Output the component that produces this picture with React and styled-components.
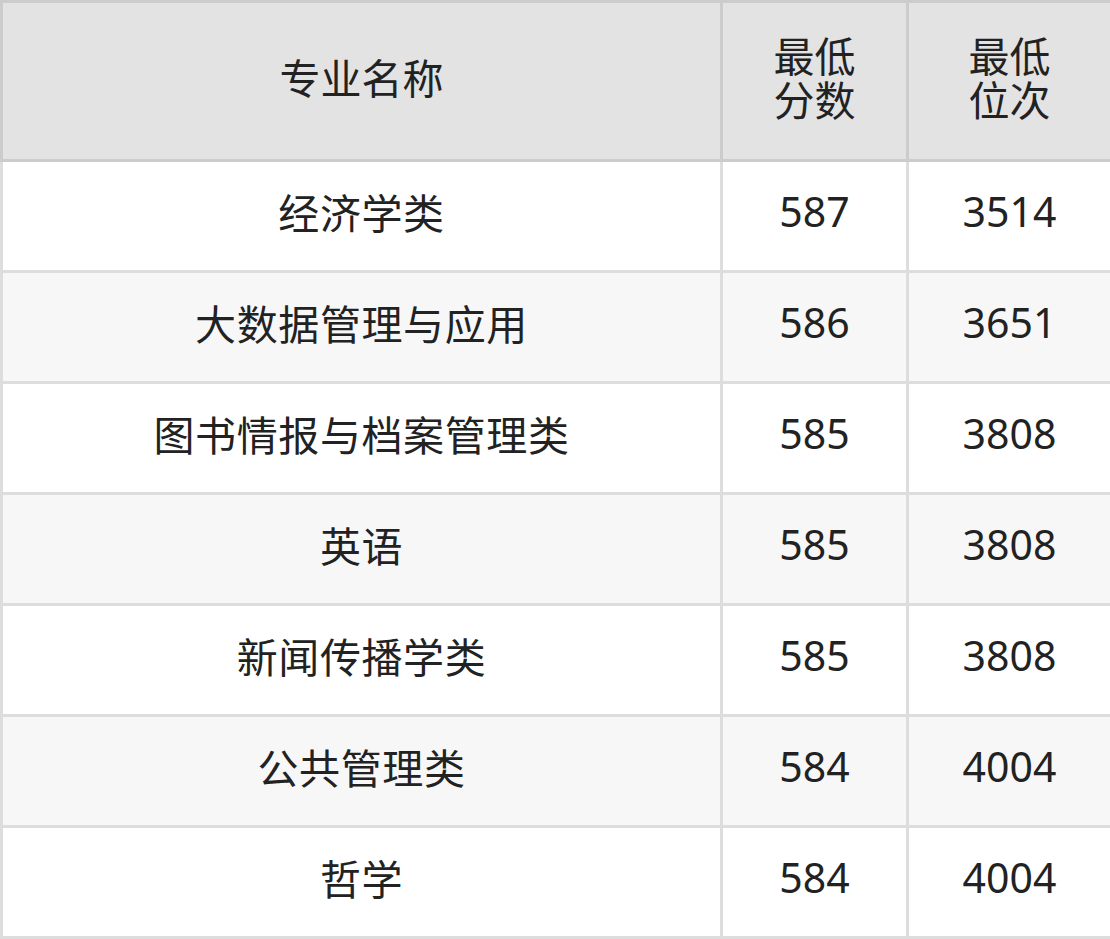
import React from 'react';
import styled, { createGlobalStyle } from 'styled-components';

const GlobalStyle = createGlobalStyle`
  html, body {
    margin: 0;
    padding: 0;
    background: #fff;
  }
`;

const Table = styled.table`
  width: 1110px;
  border-collapse: collapse;
  table-layout: fixed;
  font-family: "Noto Sans", "Noto Sans CJK SC", sans-serif;
  color: #222;
`;

const HeadCell = styled.th`
  height: 150px;
  padding: 0 0 6px;
  background: #e3e3e3;
  border: 3px solid #cccccc;
  font-weight: 400;
  font-size: 41px;
  line-height: 44px;
  text-align: center;
  vertical-align: middle;
`;

const Row = styled.tr`
  background: ${(p) => (p.$striped ? '#f7f7f7' : '#ffffff')};
`;

const Cell = styled.td`
  height: 98px;
  padding: 0 0 10px;
  border: 3px solid #dddddd;
  font-size: 41px;
  text-align: center;
  vertical-align: middle;
`;

const NameText = styled.span`
  letter-spacing: 0.6px;
`;

const rows = [
  ['经济学类', '587', '3514'],
  ['大数据管理与应用', '586', '3651'],
  ['图书情报与档案管理类', '585', '3808'],
  ['英语', '585', '3808'],
  ['新闻传播学类', '585', '3808'],
  ['公共管理类', '584', '4004'],
  ['哲学', '584', '4004'],
];

const App = () => (
  <>
    <GlobalStyle />
    <Table>
      <colgroup>
        <col style={{ width: 720 }} />
        <col style={{ width: 186 }} />
        <col style={{ width: 204 }} />
      </colgroup>
      <thead>
        <tr>
          <HeadCell>专业名称</HeadCell>
          <HeadCell>最低<br />分数</HeadCell>
          <HeadCell>最低<br />位次</HeadCell>
        </tr>
      </thead>
      <tbody>
        {rows.map((r, i) => (
          <Row key={i} $striped={i % 2 === 1}>
            <Cell><NameText>{r[0]}</NameText></Cell>
            <Cell>{r[1]}</Cell>
            <Cell>{r[2]}</Cell>
          </Row>
        ))}
      </tbody>
    </Table>
  </>
);

export default App;
